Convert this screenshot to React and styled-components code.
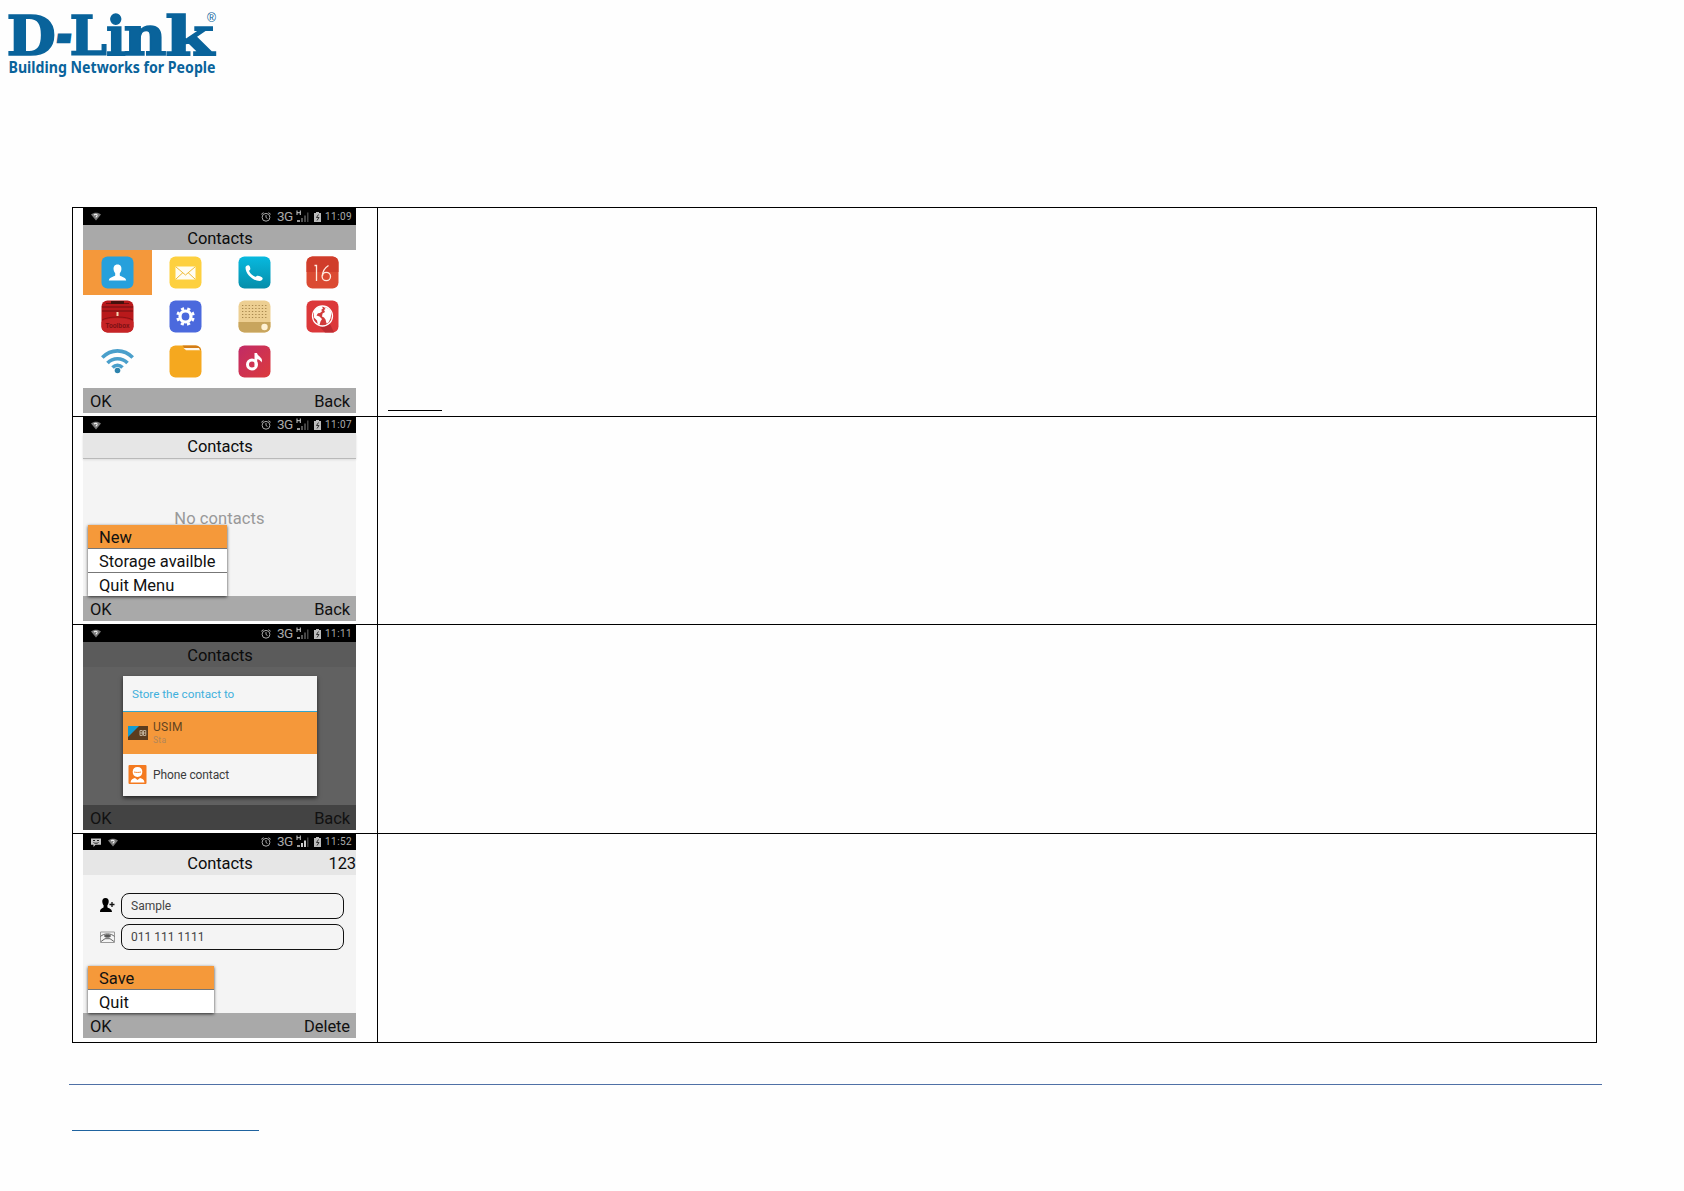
import React from "react";
import styled, { createGlobalStyle } from "styled-components";

const GlobalStyle = createGlobalStyle`
  * {
    box-sizing: border-box;
  }
  body {
    margin: 0;
    background: #fefefe;
  }
  svg {
    display: block;
    flex: none;
  }
`;

const Page = styled.div`
  width: 1684px;
  height: 1191px;
  overflow: hidden;
  display: flex;
  flex-direction: column;
  background: #fefefe;
  font-family: Roboto, "Liberation Sans", sans-serif;
`;

const Header = styled.header`
  height: 207px;
`;

const Table = styled.div`
  width: 1525px;
  margin-left: 72px;
  border-top: 1px solid #000;
  border-left: 1px solid #000;
`;

const Row = styled.div`
  display: flex;
  height: ${(props) => props.$height}px;
  border-right: 1px solid #000;
  border-bottom: 1px solid #000;
`;

const ScreenCell = styled.div`
  width: 305px;
  padding-left: 10px;
  border-right: 1px solid #000;
`;

const TextCell = styled.div`
  flex: 1;
  display: flex;
  align-items: flex-end;
  padding: 0 0 5px 10px;
`;

const Underline = styled.div`
  width: 54px;
  height: 1px;
  background: #000;
`;

const Footer = styled.footer`
  width: 1533px;
  margin: 41px 0 0 69px;
  padding: 45px 0 0 3px;
  border-top: 1px solid #4f70a6;
`;

const FooterLink = styled.div`
  width: 187px;
  height: 1px;
  background: #1f639f;
`;

const Screen = styled.div`
  position: relative;
  display: flex;
  flex-direction: column;
  width: 273px;
  height: ${(props) => props.$height}px;
  background: ${(props) => props.$background};
`;

const StatusBar = styled.div`
  flex: none;
  display: flex;
  align-items: center;
  height: ${(props) => props.$height}px;
  padding: 0 4px 0 8px;
  background: #000;
  color: #aaa;
`;

const StatusLeft = styled.div`
  flex: 1;
  display: flex;
  align-items: center;
  gap: 7px;
`;

const Network = styled.span`
  width: 16px;
  margin: -2px 3px 0 6px;
  font-size: 13.5px;
  line-height: 16px;
  letter-spacing: -0.5px;
`;

const BatteryBox = styled.div`
  margin-left: 5px;
`;

const Clock = styled.span`
  width: 27px;
  margin-left: 4px;
  font-size: 10px;
  line-height: 16px;
  letter-spacing: 0.4px;
  text-align: right;
  white-space: nowrap;
`;

const TitleBar = styled.div`
  flex: none;
  display: flex;
  align-items: center;
  justify-content: center;
  position: relative;
  height: 25px;
  padding: 2px 0 0 1px;
  background: ${(props) => props.$background};
  box-shadow: ${(props) => (props.$line ? "0 1px 0 #b9b9b9, 0 2px 2px #ddd" : "none")};
  color: #0c0c0c;
  font-size: 16.5px;
  line-height: 20px;
  letter-spacing: -0.1px;
`;

const Counter = styled.span`
  position: absolute;
  right: 0;
`;

const Body = styled.div`
  flex: 1;
  min-height: 0;
`;

const SoftKeys = styled.div`
  flex: none;
  display: flex;
  align-items: center;
  justify-content: space-between;
  height: 25px;
  padding: 3px 6px 0 7px;
  background: ${(props) => props.$background || "#a9a9a9"};
  color: #111;
  font-size: 16.5px;
  line-height: 20px;
  letter-spacing: -0.1px;
`;

const AppGrid = styled.div`
  display: grid;
  grid-template-columns: 69px 67px 70px 67px;
  grid-template-rows: 45px 43px 46px;
`;

const AppCell = styled.div`
  display: flex;
  align-items: center;
  justify-content: center;
  background: ${(props) => (props.$active ? "#f4983b" : "transparent")};
`;

const Empty = styled.div`
  padding-top: 51px;
  color: #999;
  font-size: 16.5px;
  line-height: 20px;
  letter-spacing: 0.1px;
  text-align: center;
`;

const Menu = styled.div`
  position: absolute;
  left: 5px;
  bottom: 25px;
  width: ${(props) => props.$width}px;
  box-shadow: 0 1px 3px rgba(0, 0, 0, 0.75);
`;

const MenuItem = styled.div`
  height: ${(props) => (props.$active ? 23 : 24)}px;
  padding: 3px 0 0 11px;
  border-top: ${(props) => (props.$active ? "none" : "1px solid #777")};
  background: ${(props) => (props.$active ? "#f5993a" : "#fff")};
  color: #111;
  font-size: 16.5px;
  line-height: 20px;
`;

const Dialog = styled.div`
  width: 194px;
  height: 120px;
  margin: 9px 0 0 40px;
  background: #f5f5f5;
  box-shadow: 0 2px 4px rgba(0, 0, 0, 0.65);
`;

const DialogTitle = styled.div`
  height: 36px;
  padding: 10px 0 0 9px;
  border-bottom: 1px solid #33a5cb;
  color: #3fb0dc;
  font-size: 11.7px;
  line-height: 16px;
`;

const Option = styled.div`
  display: flex;
  align-items: center;
  height: ${(props) => (props.$active ? 42 : 41)}px;
  padding-left: 5px;
  background: ${(props) => (props.$active ? "#f5983a" : "transparent")};
  color: ${(props) => (props.$active ? "#62431f" : "#3c3c3c")};
  font-size: 12px;
  line-height: 14px;
  letter-spacing: ${(props) => (props.$active ? 0.3 : -0.1)}px;
`;

const OptionIcon = styled.div`
  width: 25px;
`;

const OptionNote = styled.div`
  color: #b1875b;
  font-size: 8.5px;
  line-height: 13px;
`;

const Form = styled.div`
  display: flex;
  flex-direction: column;
  gap: 5px;
  padding: 18px 12px 0 15px;
`;

const Field = styled.div`
  display: flex;
  align-items: center;
`;

const FieldIcon = styled.div`
  width: 23px;
  padding-left: 2px;
`;

const FieldValue = styled.div`
  flex: 1;
  height: 26px;
  padding-left: 9px;
  border: 1px solid #111;
  border-radius: 8px;
  color: #444;
  font-size: 12px;
  line-height: 24px;
`;

const blue = "#09639b";

const Logo = () => (
  <svg width="240" height="90" viewBox="0 0 240 90" fill={blue} overflow="visible">
    <text y="55" fontFamily="DejaVu Serif" fontWeight="700" fontSize="54" stroke={blue} strokeWidth="1.5">
      <tspan x="6.5" textLength="49.5" lengthAdjust="spacingAndGlyphs">D</tspan>
      <tspan x="56" dy="-2" textLength="16" lengthAdjust="spacingAndGlyphs" fontStyle="italic" strokeWidth="2.5">-</tspan>
      <tspan x="69.5" dy="2" textLength="37.5" lengthAdjust="spacingAndGlyphs">L</tspan>
      <tspan x="106" textLength="20" lengthAdjust="spacingAndGlyphs">i</tspan>
      <tspan x="123.5" textLength="43" lengthAdjust="spacingAndGlyphs">n</tspan>
      <tspan x="165" textLength="49" lengthAdjust="spacingAndGlyphs">k</tspan>
    </text>
    <text x="207" y="22" fontFamily="Liberation Sans" fontSize="12" textLength="9" lengthAdjust="spacingAndGlyphs">®</text>
    <text x="8.5" y="73" fontFamily="Noto Sans" fontWeight="700" fontSize="16.5" textLength="207" lengthAdjust="spacingAndGlyphs">Building Networks for People</text>
  </svg>
);

const AppIcon = ({ fill, children }) => (
  <svg width="33" height="33" viewBox="0 0 33 33">
    {fill && <rect x="0.5" y="0.5" width="32" height="32" rx="6" fill={fill} />}
    {children}
  </svg>
);

const ContactIcon = () => (
  <AppIcon fill="#27a0dc">
    <path d="M16.5 8.5c3 0 4.2 2.2 3.9 5-.2 1.7-1 2.8-1.6 3.8v2.2c1.2 1.4 5.8 1.3 6.4 5H7.8c.6-3.7 5.2-3.6 6.4-5v-2.2c-.6-1-1.4-2.1-1.6-3.8-.3-2.8.9-5 3.9-5z" fill="#fff" />
  </AppIcon>
);

const MailIcon = () => (
  <AppIcon fill="#fdd03f">
    <rect x="6.5" y="10.5" width="20" height="13" rx="1" fill="#fffdf2" />
    <path d="M7 11l9.5 8L26 11M7 23l7-6.5M26 23l-7-6.5" fill="none" stroke="#f0bd3a" strokeWidth="1" />
  </AppIcon>
);

const PhoneIcon = () => (
  <AppIcon fill="url(#phoneFill)">
    <defs>
      <linearGradient id="phoneFill" x1="0" y1="0" x2="0" y2="1">
        <stop offset="0" stopColor="#08b9df" />
        <stop offset="1" stopColor="#058eaa" />
      </linearGradient>
    </defs>
    <path d="M7.5 11.5c0-1.5 1.5-2.5 3-2.3 1.3.5 2.2 3 1.7 4.2-.3.7-1.3 1-1 1.8 1 2.2 3.5 4.6 6 5.6.8.3 1-.9 2-1.1 1.6-.3 4.8 1 5.4 2.4.4 1.5-1.2 2.9-3.1 2.9C14.8 25 7.5 17.8 7.5 11.5z" fill="#fff" />
  </AppIcon>
);

const CalendarIcon = () => (
  <AppIcon fill="#db4a32">
    <path d="M.5 16V6.5a6 6 0 0 1 6-6h20a6 6 0 0 1 6 6V16z" fill="#d03d2b" />
    <path d="M8.5 9.5h2V25M22.5 9.5c-4 2.5-6 6-6 10.5" fill="none" stroke="#ffe9df" strokeWidth="1.3" />
    <circle cx="20.3" cy="20.5" r="4.2" fill="none" stroke="#ffe9df" strokeWidth="1.3" />
  </AppIcon>
);

const ToolboxIcon = () => (
  <AppIcon fill="#b9191b">
    <path d="M1 7h31M5 3.5h5M23 3.5h5M1 11h31" stroke="#6f1012" strokeWidth="1.2" />
    <path d="M10 1h13v3H10z" fill="#45110d" />
    <path d="M.5 22C5 17 28 17 32.5 22v4.5a6 6 0 0 1-6 6h-20a6 6 0 0 1-6-6z" fill="#c62426" />
    <path d="M1 20C7 16 26 16 32 20" fill="none" stroke="#8c1114" />
    <rect x="15.5" y="12" width="2" height="4" fill="#f3d9b5" />
    <text x="4.5" y="27.5" fontFamily="Liberation Sans" fontWeight="700" fontSize="7" fill="#7b1013" textLength="24" lengthAdjust="spacingAndGlyphs">Toolbox</text>
  </AppIcon>
);

const SettingsIcon = () => (
  <AppIcon fill="#4b69dd">
    <circle cx="16.5" cy="16.5" r="5.5" fill="none" stroke="#fff" strokeWidth="3.2" />
    <circle cx="16.5" cy="16.5" r="8" fill="none" stroke="#fff" strokeWidth="2.6" strokeDasharray="3.14 3.14" transform="rotate(11 16.5 16.5)" />
  </AppIcon>
);

const RadioIcon = () => (
  <AppIcon fill="#edcf92">
    <path d="M.5 22h32v4.5a6 6 0 0 1-6 6h-20a6 6 0 0 1-6-6z" fill="#c8a55e" />
    {[5.5, 8.5, 11.5, 14.5, 17.5].map((y) => (
      <path key={y} d={`M4 ${y}h26`} stroke="#a9894e" strokeWidth="1.2" strokeDasharray="1.3 2" />
    ))}
    <circle cx="26.5" cy="27" r="3.2" fill="#fff2d5" />
  </AppIcon>
);

const GlobeIcon = () => (
  <AppIcon fill="#dc383a">
    <path d="M24 24l4 8.5h-9L12 25z" fill="#bb2c32" />
    <circle cx="16.5" cy="16" r="10" fill="#d13b3c" stroke="#fff" strokeWidth="1.3" />
    <path d="M8 11c2-3 5-4.3 8-4.2l1 1.7-2 1.5 1.3 1-2.3 2-2 .3-1.5 2.2 3 1 2.5 2.5-1.5 2.5-1 3.5-1.7-.5-.8-4L8 17.5zM18 7c3.5.5 6.500 3 7.500 6l-1 5.500-2 4-2 1-1-4-1.500-2-2-1 .5-3 2.500-1.500-1-2 1.500-1z" fill="#fff" />
  </AppIcon>
);

const WifiIcon = () => (
  <AppIcon>
    <g fill="none" stroke="#4a9fcb" strokeWidth="3.6">
      <path d="M1.3 12.5C10 3.6 23 3.6 31.7 12.5" />
      <path d="M6.5 18c5.500-5.700 14.500-5.700 20 0" />
      <path d="M11.5 22.5c3-3 7-3 10 0" />
    </g>
    <circle cx="16.5" cy="25.5" r="2.8" fill="#2d83ad" />
  </AppIcon>
);

const FolderIcon = () => (
  <AppIcon fill="#f5a81f">
    <path d="M13.5.5h13a6 6 0 0 1 5.5 4.5H17z" fill="#d27c18" />
    <path d="M14.5 3h15.5l1 2.2H17z" fill="#fff8ed" />
  </AppIcon>
);

const MusicIcon = () => (
  <AppIcon fill="url(#musicFill)">
    <defs>
      <linearGradient id="musicFill" x1="0" y1="0" x2="1" y2="1">
        <stop offset="0" stopColor="#c12b66" />
        <stop offset="1" stopColor="#dc3a3c" />
      </linearGradient>
    </defs>
    <circle cx="14" cy="19.5" r="4.5" fill="none" stroke="#fff" strokeWidth="3" />
    <path d="M16.5 8h2.5c.5 3 5 4 5 7.5l-.5 2c-.8-2-2.5-3-4.3-3.2V21h-2.7z" fill="#fff" />
  </AppIcon>
);

const WifiStatus = () => (
  <svg width="10" height="9" viewBox="0 0 10 9">
    <path d="M0 2.5C3 0 7 0 10 2.500L5 8.500z" fill="#777" />
    <path d="M3 3.2c.8-1.400 3.700-1 3 .7-.4.700-1 .8-1 1.700" fill="none" stroke="#eee" strokeWidth="1.1" />
  </svg>
);

const MessageStatus = () => (
  <svg width="10" height="9" viewBox="0 0 10 9">
    <path d="M0 .5h10v6.3H4.5L2.5 9V6.8H0z" fill="#c4c4c4" />
    <path d="M2 2.5h2M6 2.5h2M2.5 4.5c1 1 4 1 5 0" fill="none" stroke="#222" />
  </svg>
);

const AlarmStatus = () => (
  <svg width="10" height="10" viewBox="0 0 10 10" fill="none" stroke="#aaa" strokeWidth="1">
    <circle cx="5" cy="5.3" r="3.9" />
    <path d="M5 3v2.5l1.5 1M.3 2.3l2.2-1.7M9.7 2.3L7.5.6" />
  </svg>
);

const SignalStatus = ({ strong }) => (
  <svg width="13" height="14" viewBox="0 0 13 14">
    <path d="M1 .5v4.5M4.3.5v4.500M1 2.700h3.300" stroke="#ccc" fill="none" />
    <path d="M1 10h3v2H1z" fill="#999" />
    <path d="M5 8h2v4H5z" fill={strong ? "#ccc" : "#555"} />
    <path d="M8 5.5h2V12H8z" fill={strong ? "#ccc" : "#444"} />
    <path d="M11 2.5h1.5V12H11z" fill="#444" />
  </svg>
);

const BatteryStatus = () => (
  <svg width="7" height="10" viewBox="0 0 7 10">
    <path d="M2 0h3v1h2v9H0V1h2z" fill="#bbb" />
    <path d="M4.5 2.5l-2 3H5l-2 3" fill="none" stroke="#222" strokeWidth="0.9" />
  </svg>
);

const SimIcon = () => (
  <svg width="20" height="14" viewBox="0 0 20 14">
    <rect width="20" height="14" fill="#5b3c1e" />
    <path d="M0 0h11L0 11z" fill="#159bd0" />
    <path d="M12 4.5h2.3v5H12zM15.5 4.5h2.3v5h-2.3zM12 7h6" fill="none" stroke="#c7b8a0" strokeWidth="0.9" />
  </svg>
);

const PersonIcon = () => (
  <svg width="19" height="19" viewBox="0 0 19 19">
    <rect x="0.5" width="18" height="19" rx="1" fill="#f47a20" />
    <path d="M9.5 2c3 0 4.8 2 4.8 4.8S12.5 12 9.5 12 4.7 9.6 4.7 6.8 6.5 2 9.5 2z" fill="#fff" />
    <path d="M6 7c2.3.6 4.7.6 7 0" fill="none" stroke="#f47a20" strokeWidth="0.9" />
    <path d="M2.5 17.500c.3-3 2.500-4.200 4.500-4.500l2.500 2 2.500-2c2 .3 4.200 1.500 4.500 4.500z" fill="#fff" />
  </svg>
);

const AddPersonIcon = () => (
  <svg width="15" height="18" viewBox="0 0 15 18">
    <path d="M5.5 1c2.5 0 3.5 1.7 3.2 4-.2 1.5-.8 2.5-1.3 3.3v2c1 1.2 4.4 1.1 4.6 4.700H0c.1-3.600 2.600-3.500 3.600-4.700v-2C3 7.500 2.500 6.500 2.300 5 2 2.700 3 1 5.500 1z" fill="#000" />
    <path d="M9.5 7.5h5M12 5v5" stroke="#111" strokeWidth="1.3" />
  </svg>
);

const CardIcon = () => (
  <svg width="15" height="12" viewBox="0 0 15 12" fill="none" stroke="#666">
    <path d="M.5 1h14v10.5H.5z" stroke="#999" />
    <path d="M.5 5.500c3.500-3.500 10.500-3.500 14 0M1 10.500l4-2.800h5l4 2.800" />
    <ellipse cx="7.5" cy="5" rx="3" ry="1.3" fill="#555" />
  </svg>
);

const apps = [
  ContactIcon, MailIcon, PhoneIcon, CalendarIcon,
  ToolboxIcon, SettingsIcon, RadioIcon, GlobeIcon,
  WifiIcon, FolderIcon, MusicIcon
];

const PhoneStatus = ({ time, height, message, strong }) => (
  <StatusBar $height={height}>
    <StatusLeft>
      {message && <MessageStatus />}
      <WifiStatus />
    </StatusLeft>
    <AlarmStatus />
    <Network>3G</Network>
    <SignalStatus strong={strong} />
    <BatteryBox>
      <BatteryStatus />
    </BatteryBox>
    <Clock>{time}</Clock>
  </StatusBar>
);

const TableRow = ({ height, children, note }) => (
  <Row $height={height}>
    <ScreenCell>{children}</ScreenCell>
    <TextCell>{note}</TextCell>
  </Row>
);

const App = () => (
  <Page>
    <GlobalStyle />
    <Header>
      <Logo />
    </Header>
    <Table>
      <TableRow height={209} note={<Underline />}>
        <Screen $height={205} $background="#fefefe">
          <PhoneStatus time="11:09" height={17} />
          <TitleBar $background="#a9a9a9">Contacts</TitleBar>
          <Body>
            <AppGrid>
              {apps.map((Icon, index) => (
                <AppCell key={index} $active={index === 0}>
                  <Icon />
                </AppCell>
              ))}
            </AppGrid>
          </Body>
          <SoftKeys>
            <span>OK</span>
            <span>Back</span>
          </SoftKeys>
        </Screen>
      </TableRow>

      <TableRow height={208}>
        <Screen $height={204} $background="#f4f4f4">
          <PhoneStatus time="11:07" height={16} />
          <TitleBar $background="#e6e6e6" $line>Contacts</TitleBar>
          <Body>
            <Empty>No contacts</Empty>
          </Body>
          <SoftKeys>
            <span>OK</span>
            <span>Back</span>
          </SoftKeys>
          <Menu $width={139}>
            <MenuItem $active>New</MenuItem>
            <MenuItem>Storage availble</MenuItem>
            <MenuItem>Quit Menu</MenuItem>
          </Menu>
        </Screen>
      </TableRow>

      <TableRow height={209}>
        <Screen $height={205} $background="#616161">
          <PhoneStatus time="11:11" height={17} />
          <TitleBar $background="#5b5b5b">Contacts</TitleBar>
          <Body>
            <Dialog>
              <DialogTitle>Store the contact to</DialogTitle>
              <Option $active>
                <OptionIcon><SimIcon /></OptionIcon>
                <div>
                  USIM
                  <OptionNote>Sta</OptionNote>
                </div>
              </Option>
              <Option>
                <OptionIcon><PersonIcon /></OptionIcon>
                Phone contact
              </Option>
            </Dialog>
          </Body>
          <SoftKeys $background="#434343">
            <span>OK</span>
            <span>Back</span>
          </SoftKeys>
        </Screen>
      </TableRow>

      <TableRow height={209}>
        <Screen $height={204} $background="#f4f4f4">
          <PhoneStatus time="11:52" height={16} message strong />
          <TitleBar $background="#e6e6e6">
            Contacts
            <Counter>123</Counter>
          </TitleBar>
          <Body>
            <Form>
              <Field>
                <FieldIcon><AddPersonIcon /></FieldIcon>
                <FieldValue>Sample</FieldValue>
              </Field>
              <Field>
                <FieldIcon><CardIcon /></FieldIcon>
                <FieldValue>011 111 1111</FieldValue>
              </Field>
            </Form>
          </Body>
          <SoftKeys>
            <span>OK</span>
            <span>Delete</span>
          </SoftKeys>
          <Menu $width={126}>
            <MenuItem $active>Save</MenuItem>
            <MenuItem>Quit</MenuItem>
          </Menu>
        </Screen>
      </TableRow>
    </Table>
    <Footer>
      <FooterLink />
    </Footer>
  </Page>
);

export default App;
